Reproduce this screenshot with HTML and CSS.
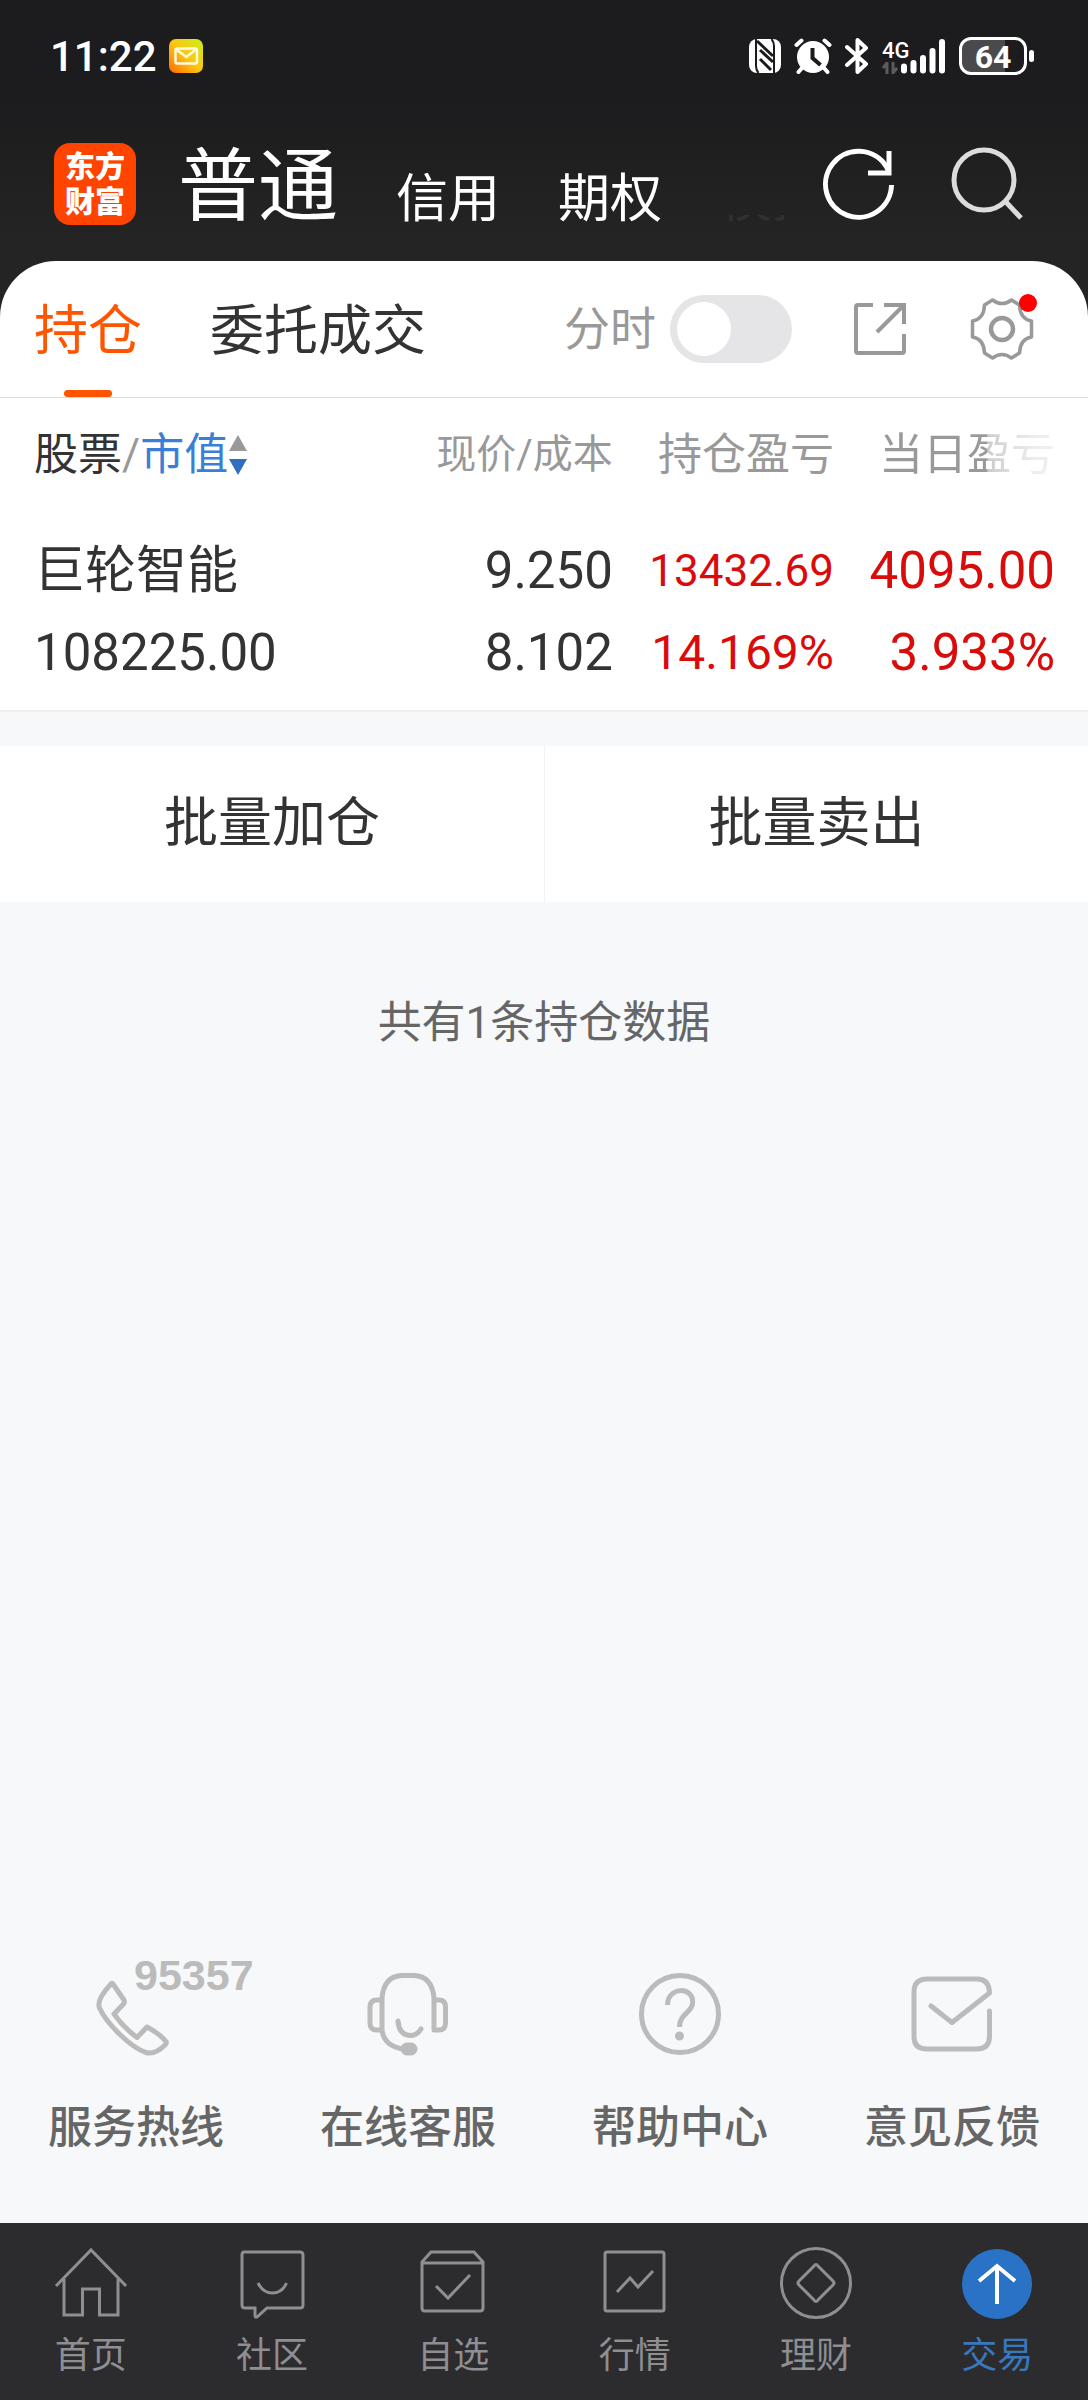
FILE: index.html
```html
<!DOCTYPE html>
<html lang="zh-CN">
<head>
    <meta charset="UTF-8">
    <meta name="viewport" content="width=device-width, initial-scale=1.0">
    <title>持仓</title>
    <link rel="stylesheet" href="styles.css">
</head>
<body>
    <header class="app-header">
        <div class="status-bar">
            <span class="clock">11:22</span>
            <svg class="mail-app" width="34" height="34" viewBox="0 0 34 34">
                <defs>
                    <linearGradient id="mailBg" x1="0" y1="1" x2="1" y2="0">
                        <stop offset="0" stop-color="#ff6a00"/>
                        <stop offset="0.5" stop-color="#fdc613"/>
                        <stop offset="1" stop-color="#c8f018"/>
                    </linearGradient>
                </defs>
                <rect width="34" height="34" rx="7" fill="url(#mailBg)"/>
                <rect x="6.500" y="9.500" width="21.500" height="15" rx="2" fill="none" stroke="#fffbe0" stroke-width="2.500"/>
                <path d="M8 11l9.200 7L26.500 11" fill="none" stroke="#fffbe0" stroke-width="2.500"/>
            </svg>
            <div class="status-icons">
                <svg width="32" height="34" viewBox="0 0 32 34">
                    <rect width="32" height="34" rx="8" fill="#fff"/>
                    <path d="M7 0v27q0 4 2.500 7M25 34V7q0-4-2.500-7" fill="none" stroke="#1c1c1e" stroke-width="2"/>
                    <path d="M8 2l16 15M11 11l13 12M11 20l11 11" fill="none" stroke="#1c1c1e" stroke-width="3"/>
                </svg>
                <svg width="38" height="36" viewBox="0 0 38 36">
                    <circle cx="19" cy="19" r="16" fill="#fff"/>
                    <path d="M2.500 7l5-4.500M35.500 7l-5-4.500M8 30l-3.500 4M30 30l3.500 4" stroke="#fff" stroke-width="4" stroke-linecap="round"/>
                    <path d="M18.500 10v10l8 7" fill="none" stroke="#1c1c1e" stroke-width="4"/>
                </svg>
                <svg width="24" height="36" viewBox="0 0 24 36">
                    <path d="M2 9l19 17-8.500 8V2L21 10 2 27" fill="none" stroke="#fff" stroke-width="4" stroke-linejoin="round" stroke-linecap="round"/>
                </svg>
                <div class="signal">
                    <div class="signal-type">
                        <span>4G</span>
                        <svg width="16" height="12" viewBox="0 0 16 12">
                            <path d="M5 12V1L1 6M11 0v11l4-5" fill="none" stroke="#5b5b5d" stroke-width="3"/>
                        </svg>
                    </div>
                    <svg class="bars" width="46" height="36" viewBox="0 0 46 36">
                        <path d="M4 28.500v4M13.500 25v7.500M23 20v12.500M32.500 13v19.500M42 4v28.500" stroke="#fff" stroke-width="6" stroke-linecap="round"/>
                    </svg>
                </div>
                <div class="battery">64</div>
            </div>
        </div>
        <nav class="account-nav">
            <div class="logo">东方<br>财富</div>
            <div class="account-tabs">
                <a href="#" class="current">普通</a>
                <a href="#">信用</a>
                <a href="#">期权</a>
                <a href="#" class="faded">模拟</a>
            </div>
            <button type="button" class="icon-btn" aria-label="刷新">
                <svg width="74" height="74" viewBox="0 0 74 74" fill="none" stroke="#fff" stroke-width="5">
                    <path d="M69.500 38A33 33 0 1 1 64 19L67 25"/>
                    <path d="M67 4v22H46"/>
                </svg>
            </button>
            <button type="button" class="icon-btn" aria-label="搜索">
                <svg width="74" height="74" viewBox="0 0 74 74" fill="none" stroke="#dcdcdc" stroke-width="5">
                    <circle cx="34" cy="33" r="30"/>
                    <path d="M55 54l16 17"/>
                </svg>
            </button>
        </nav>
    </header>

    <main>
        <section class="panel">
            <div class="panel-tabs">
                <a href="#" class="tab active">持仓</a>
                <a href="#" class="tab">委托成交</a>
                <label class="switch">
                    <span>分时</span>
                    <input type="checkbox" id="timeShare">
                </label>
                <button type="button" class="icon-btn share" aria-label="分享">
                    <svg width="54" height="54" viewBox="0 0 54 54" fill="none" stroke="#999" stroke-width="4">
                        <path d="M20 3H5q-2 0-2 2v44q0 2 2 2h44q2 0 2-2V32"/>
                        <path d="M31 3h20v19M51 3L24 30"/>
                    </svg>
                </button>
                <button type="button" class="icon-btn settings" aria-label="设置">
                    <svg width="64" height="64" viewBox="-32 -32 64 64" fill="none" stroke="#999">
                        <path stroke-width="3.500" stroke-linejoin="round" d="M-9.500-29Q0-22 9.500-29L17.500-24Q18-10 29.500-8V8Q18 10 17.500 24L9.500 29Q0 22-9.500 29L-17.500 24Q-18 10-29.500 8V-8Q-18-10-17.500-24Z"/>
                        <circle r="11" stroke-width="4.500"/>
                    </svg>
                    <span class="dot"></span>
                </button>
            </div>

            <table class="holdings">
                <thead>
                    <tr>
                        <th class="stock">
                            <div class="sorter">股票<span class="slash">/</span><a href="#">市值</a><svg width="20" height="42" viewBox="0 0 20 42"><path d="M10 1L19 17H1Z" fill="#999"/><path d="M10 41L19 25H1Z" fill="#2f6fc0"/></svg></div>
                        </th>
                        <th class="price">现价/成本</th>
                        <th class="profit">持仓盈亏</th>
                        <th class="today"><span>当日盈亏</span></th>
                    </tr>
                </thead>
                <tbody>
                    <tr>
                        <td>巨轮智能</td>
                        <td>9.250</td>
                        <td class="red small">13432.69</td>
                        <td class="red">4095.00</td>
                    </tr>
                    <tr>
                        <td>108225.00</td>
                        <td>8.102</td>
                        <td class="red medium">14.169%</td>
                        <td class="red">3.933%</td>
                    </tr>
                </tbody>
            </table>
        </section>

        <div class="batch">
            <button type="button">批量加仓</button>
            <button type="button">批量卖出</button>
        </div>

        <p class="summary">共有1条持仓数据</p>

        <div class="services">
            <a href="#">
                <span class="service-icon">
                    <svg width="84" height="84" viewBox="-4 0 84 84">
                        <path d="M13 12Q14 11 15 12L26 28Q27 30 25.500 32L16 42Q25 55 39 65.500L49 55Q62 62 68 69.500 69 71 67 73Q57 83 48 80.500C33 76 9 52 1.500 36Q-2 28 13 12Z"/>
                    </svg>
                    <b>95357</b>
                </span>
                服务热线
            </a>
            <a href="#">
                <span class="service-icon">
                    <svg width="84" height="84" viewBox="0 0 84 84">
                        <path d="M16 58V26Q18 4 36 3.500H48Q66 4 68 26V58H73Q79.500 58 79.500 51V35Q79.500 28 73 28H68M16 28H11Q4 28 4 35V51Q4 58 11 58H16Q18 74 37 77"/>
                        <path d="M32 49Q33 63 44 63.500 51 63.500 55 57"/>
                        <rect class="solid" x="37" y="73" width="12" height="8" rx="4"/>
                    </svg>
                </span>
                在线客服
            </a>
            <a href="#">
                <span class="service-icon">
                    <svg width="84" height="84" viewBox="0 0 84 84">
                        <circle cx="42" cy="42" r="38.500"/>
                        <path stroke-linecap="butt" d="M29.500 33C29.500 14 57 14 54.500 32 53 41 41.500 42 41.500 55"/>
                        <circle class="solid" cx="41.500" cy="64" r="2"/>
                    </svg>
                </span>
                帮助中心
            </a>
            <a href="#">
                <span class="service-icon">
                    <svg width="84" height="84" viewBox="0 0 84 84">
                        <path d="M79.500 39V64Q79.500 77 67 77H17Q4 77 4 65V20Q4 7 17 7H67Q79 7 79.500 21L42 50.500 21 34"/>
                    </svg>
                </span>
                意见反馈
            </a>
        </div>
    </main>

    <nav class="bottom-nav">
        <a href="#">
            <svg width="76" height="76" viewBox="0 0 76 76"><path d="M3 41L38 5 73 41M11 34V70H29.500V44H46.500V70H65V34"/></svg>
            首页
        </a>
        <a href="#">
            <svg width="76" height="76" viewBox="0 0 76 76"><path d="M10 7H66Q69 7 69 10V60Q69 63 66 63H33L23 72Q21 73 21 70V63H11Q8 63 8 60V10Q8 7 10 7ZM24 38Q29 48 38.500 48 48 48 52.500 38"/></svg>
            社区
        </a>
        <a href="#">
            <svg width="76" height="76" viewBox="0 0 76 76"><path d="M7 17L16 7H59L68 17V63Q68 66 65 66H10Q7 66 7 63ZM7 18H68M21 41L33 53 55 30"/></svg>
            自选
        </a>
        <a href="#">
            <svg width="76" height="76" viewBox="0 0 76 76"><path d="M10 7H65Q67 7 67 9V64Q67 66 65 66H10Q8 66 8 64V9Q8 7 10 7ZM20 47L33 33 41 42 56 26"/></svg>
            行情
        </a>
        <a href="#">
            <svg width="76" height="76" viewBox="0 0 76 76"><circle cx="38" cy="38" r="34.500"/><path d="M36 21Q38 18 40 21L55 36Q57 38 55 40L40 55Q38 58 36 55L21 40Q19 38 21 36Z"/></svg>
            理财
        </a>
        <a href="#" class="active">
            <svg width="76" height="76" viewBox="0 0 76 76"><circle class="disc" cx="38" cy="39" r="35"/><path class="arrow" d="M38 59V22M20 36L38 21 56 36"/></svg>
            交易
        </a>
    </nav>
</body>
</html>
```
FILE: styles.css
```css
* {
    box-sizing: border-box;
}

body {
    margin: 0;
    min-height: 100vh;
    display: flex;
    flex-direction: column;
    font-family: Roboto, "Noto Sans CJK SC", sans-serif;
    color: #333;
    background: #f6f8fa;
}

a {
    color: inherit;
    text-decoration: none;
}

button {
    padding: 0;
    border: none;
    background: none;
    font-family: inherit;
    color: inherit;
    cursor: pointer;
}

svg {
    display: block;
    flex: none;
}

/* header */
.app-header {
    padding-bottom: 64px;
    color: #fff;
    background: linear-gradient(#1c1c1e 100px, #242424 240px);
}

.status-bar {
    display: flex;
    align-items: center;
    height: 112px;
    padding: 0 54px 0 50px;
}

.clock {
    margin-right: 12px;
    font-size: 42px;
    font-weight: 500;
}

.status-icons {
    display: flex;
    align-items: center;
    gap: 13px;
    margin-left: auto;
}

.signal {
    display: flex;
    align-items: flex-end;
    height: 36px;
}

.signal-type {
    width: 18px;
    font-size: 22px;
    font-weight: 500;
    line-height: 22px;
}

.battery {
    position: relative;
    width: 68px;
    height: 38px;
    margin-right: 7px;
    border: 3px solid #fff;
    border-radius: 12px;
    font-size: 32px;
    font-weight: 700;
    line-height: 34px;
    text-align: center;
    background: linear-gradient(90deg, #4a4a4c 70%, #1c1c1e 70%);
}

.battery::after {
    content: "";
    position: absolute;
    top: 10px;
    right: -10px;
    width: 5px;
    height: 12px;
    border-radius: 3px;
    background: #fff;
}

.account-nav {
    display: flex;
    align-items: center;
    height: 144px;
    padding: 0 64px 0 54px;
}

.logo {
    width: 82px;
    height: 82px;
    padding-top: 6px;
    border-radius: 16px;
    font-size: 30px;
    font-weight: 900;
    line-height: 35px;
    text-align: center;
    background: #ff4400;
}

.account-tabs {
    flex: 1;
    display: flex;
    align-items: flex-end;
    gap: 58px;
    min-width: 0;
    margin-left: 42px;
    padding-top: 6px;
    font-size: 52px;
    line-height: 54px;
    white-space: nowrap;
}

.account-tabs .current {
    font-size: 80px;
    line-height: 80px;
}

/* the next account type only shows faintly under the right edge */
.account-tabs .faded {
    color: transparent;
    background: linear-gradient(transparent 78%, #303030 78%) no-repeat;
    background-size: 68px 100%;
    background-clip: text;
}

.icon-btn {
    position: relative;
}

.account-nav .icon-btn + .icon-btn {
    margin-left: 54px;
}

/* holdings */
main {
    flex: 1;
    display: flex;
    flex-direction: column;
}

.panel {
    margin-top: -59px;
    border-bottom: 2px solid #eee;
    border-radius: 56px 56px 0 0;
    background: #fff;
}

.panel-tabs {
    display: flex;
    align-items: center;
    height: 137px;
    padding: 0 54px 0 34px;
    border-bottom: 1px solid #ddd;
}

.tab {
    position: relative;
    margin-right: 68px;
    padding-top: 6px;
    font-size: 54px;
    line-height: 130px;
}

.tab.active {
    color: #ff5500;
}

.tab.active::after {
    content: "";
    position: absolute;
    bottom: 0;
    left: 50%;
    width: 48px;
    height: 7px;
    margin-left: -24px;
    border-radius: 4px;
    background: #ff5500;
}

.switch {
    display: flex;
    align-items: center;
    gap: 14px;
    margin-left: auto;
    font-size: 46px;
    line-height: 46px;
    color: #999;
}

.switch input {
    appearance: none;
    width: 122px;
    height: 68px;
    margin: 0;
    padding: 7px;
    border-radius: 34px;
    background: #e5e5e7;
}

.switch input::before {
    content: "";
    display: block;
    width: 54px;
    height: 54px;
    border-radius: 50%;
    background: #fff;
}

.switch input:checked::before {
    margin-left: auto;
}

.share {
    margin-left: 61px;
}

.settings {
    margin-left: 63px;
}

.dot {
    position: absolute;
    top: -3px;
    right: -3px;
    width: 18px;
    height: 18px;
    border-radius: 50%;
    background: #f00;
}

.holdings {
    width: 100%;
    border-collapse: collapse;
    table-layout: fixed;
    margin-bottom: 16px;
}

.holdings th,
.holdings td {
    padding: 0;
    text-align: right;
    font-weight: 400;
    white-space: nowrap;
}

.holdings th {
    height: 132px;
    padding-bottom: 18px;
    font-size: 44px;
    line-height: 64px;
    color: #999;
}

.holdings td {
    height: 82px;
    font-size: 51px;
    line-height: 82px;
}

.holdings th:first-child,
.holdings td:first-child {
    padding-left: 34px;
    text-align: left;
}

.holdings th:last-child,
.holdings td:last-child {
    padding-right: 33px;
}

.holdings .stock {
    width: 36%;
    color: #333;
}

.holdings .price {
    font-size: 40px;
}

.sorter {
    display: flex;
    align-items: center;
}

.sorter a {
    color: #3a7fd5;
}

.slash {
    color: #999;
}

.holdings .today {
    width: 254px;
}

.today span {
    color: transparent;
    background: linear-gradient(90deg, #999 61%, #ccc 62%, #ddd 74%, #eee 90%);
    background-clip: text;
}

.holdings .red {
    color: #d90b0b;
}

.holdings .small {
    font-size: 44px;
}

.holdings .medium {
    font-size: 48px;
}

.batch {
    display: grid;
    grid-template-columns: 1fr 1fr;
    margin-top: 34px;
    background: #fff;
}

.batch button {
    height: 156px;
    font-size: 54px;
    line-height: 54px;
}

.batch button + button {
    border-left: 1px solid #f2f2f4;
}

.summary {
    margin: 89px 0;
    font-size: 44px;
    line-height: 64px;
    text-align: center;
    color: #666;
}

/* service links */
.services {
    display: grid;
    grid-template-columns: repeat(4, 1fr);
    margin-top: auto;
    padding-bottom: 63px;
}

.services a {
    display: flex;
    flex-direction: column;
    align-items: center;
    gap: 40px;
    font-size: 44px;
    font-weight: 500;
    line-height: 64px;
    color: #666;
}

.service-icon {
    position: relative;
}

.service-icon svg {
    fill: none;
    stroke: #bbb;
    stroke-width: 5;
    stroke-linecap: round;
    stroke-linejoin: round;
}

.service-icon .solid {
    fill: #bbb;
}

.service-icon b {
    position: absolute;
    top: -18px;
    left: 40px;
    font-family: "Liberation Sans", sans-serif;
    font-size: 43px;
    line-height: 43px;
    color: #bbb;
}

/* bottom navigation */
.bottom-nav {
    display: grid;
    grid-template-columns: repeat(6, 1fr);
    padding: 22px 0 19px;
    background: #2c2c2e;
}

.bottom-nav a {
    display: flex;
    flex-direction: column;
    align-items: center;
    gap: 10px;
    font-size: 36px;
    line-height: 50px;
    color: #8e8e93;
}

.bottom-nav svg {
    fill: none;
    stroke: #8e8e93;
    stroke-width: 3;
}

.bottom-nav .active {
    color: #3a78be;
}

.bottom-nav .disc {
    fill: #2a72c5;
    stroke: none;
}

.bottom-nav .arrow {
    stroke: #fff;
    stroke-width: 4;
}
```
